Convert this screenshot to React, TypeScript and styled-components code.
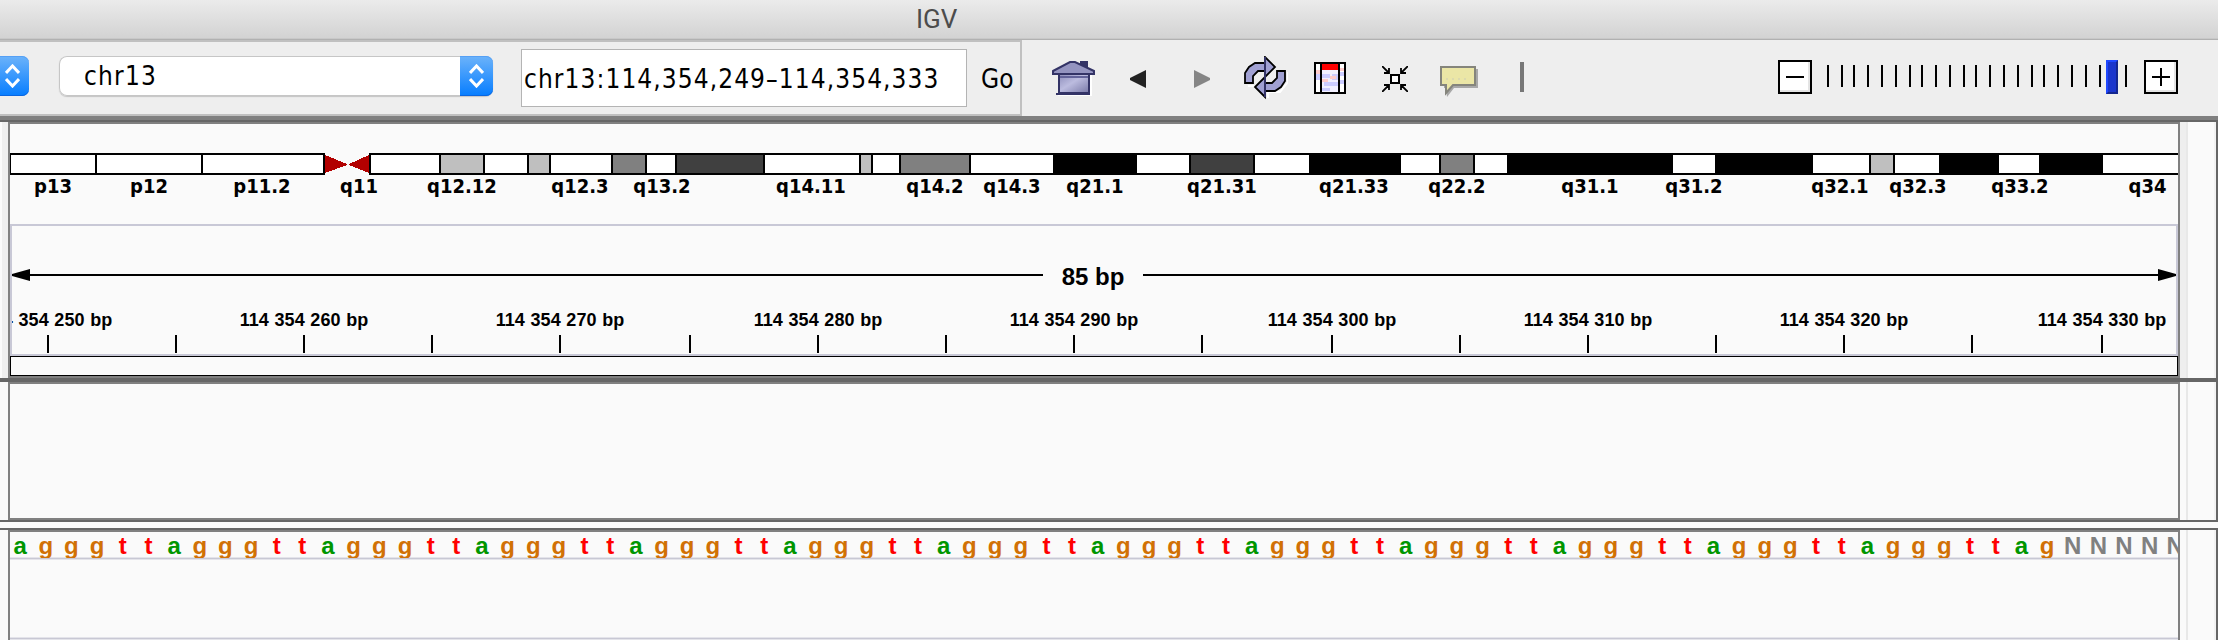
import React from 'react';
import styled, { createGlobalStyle } from 'styled-components';

const Global = createGlobalStyle`
  *, *::before, *::after { box-sizing: border-box; }
  body { margin: 0; background: #fafafa; }
`;

const ui = `'DejaVu Sans Condensed', 'DejaVu Sans', sans-serif`;
const data = `'Liberation Sans', Arial, sans-serif`;

const Window = styled.div`
  width: 2218px;
  height: 640px;
  overflow: hidden;
  background: #fafafa;
  display: flex;
  flex-direction: column;
  color: #000;
`;

const TitleBar = styled.header`
  height: 40px;
  flex: none;
  background: linear-gradient(#ebebeb, #d2d2d2);
  border-bottom: 1px solid #b1b1b1;
  box-shadow: inset 0 -1px #c8c8c8;
  font: 26px/39px Roboto, sans-serif;
  color: #4c4c4c;
  padding-left: 916px;
`;

const Toolbar = styled.div`
  height: 76px;
  flex: none;
  background: #eee;
  display: flex;
`;

const Navigation = styled.div`
  width: 1022px;
  border: 2px solid #c0c0c0;
  border-left: 0;
  display: flex;
  align-items: flex-start;
  font: 26px/30px ${ui};
  font-stretch: condensed;
`;

const Stepper = styled.span<{ $w: number }>`
  width: ${(p) => p.$w}px;
  height: 40px;
  flex: none;
  border-radius: 0 7px 7px 0;
  background: linear-gradient(#6cb3fa, #067dff);
  box-shadow: inset 0 1px #55a0f5, inset 0 -1px #0a66e0;
  display: flex;
  justify-content: flex-end;
  padding: 8px 9px 0 0;
`;

const GenomeEnd = styled.div`
  margin: 14px 30px 0 0;
`;

const ChromosomeSelect = styled.div`
  width: 434px;
  height: 40px;
  margin: 14px 28px 0 0;
  flex: none;
  border-radius: 8px;
  background: #fff;
  box-shadow: inset 0 0 0 1px #c6c6c6, 0 1px 1px #c4c4c4;
  display: flex;
  justify-content: space-between;
`;

const SelectValue = styled.span`
  padding: 5px 0 0 25px;
  letter-spacing: 1.2px;
`;

const LocusField = styled.div`
  width: 446px;
  height: 58px;
  margin: 7px 14px 0 0;
  flex: none;
  background: #fff;
  border: 1px solid #b4b4b4;
  padding: 14px 0 0 2px;
  letter-spacing: 1.08px;
  white-space: nowrap;
`;

const GoButton = styled.span`
  padding-top: 22px;
`;

const Tools = styled.div`
  padding-top: 14px;
  width: 540px;
  display: flex;
  align-items: flex-start;
`;

const Tool = styled.span<{ $gap: number; $top?: number }>`
  margin: ${(p) => p.$top ?? 0}px 0 0 ${(p) => p.$gap}px;
  display: block;
  flex: none;
  line-height: 0;
`;

const Separator = styled.span`
  width: 4px;
  height: 30px;
  margin: 8px 0 0 42px;
  background: #777;
`;

const Zoom = styled.div`
  padding: 20px 0 0 216px;
  display: flex;
`;

const ZoomButton = styled.span`
  width: 34px;
  height: 34px;
  border: 2px solid #000;
  background: #fff;
  box-shadow: inset -2px -2px #e4e4e4;
  display: block;
  line-height: 0;
`;

const Scale = styled.div`
  width: 332px;
  padding-left: 15px;
  display: flex;
`;

const ScaleCell = styled.span<{ $w: number }>`
  width: ${(p) => p.$w}px;
  flex: none;
`;

const ScaleTick = styled.span`
  display: block;
  width: 2px;
  height: 22px;
  margin-top: 5px;
  background: #000;
`;

const Thumb = styled.span`
  display: block;
  width: 12px;
  height: 34px;
  background: #1a35cc;
  border: 2px solid #1f48ff;
  border-right-color: #13268f;
  border-bottom-color: #13268f;
`;

const TopDivider = styled.div`
  height: 6px;
  flex: none;
  border-top: 4px solid #808080;
  border-bottom: 2px solid #666;
`;

const Divider = styled.div<{ $h: number }>`
  height: ${(p) => p.$h}px;
  flex: none;
  background: #666;
`;

const Gap = styled.div`
  height: 10px;
  flex: none;
  border: solid #666;
  border-width: 2px 0;
`;

const Row = styled.div<{ $h: number }>`
  height: ${(p) => p.$h}px;
  flex: none;
  display: flex;
`;

const LeftEdge = styled.div<{ $bg: string }>`
  width: 8px;
  flex: none;
  border-right: 6px solid ${(p) => p.$bg};
`;

const Panel = styled.div<{ $open?: boolean }>`
  width: 2172px;
  flex: none;
  border: 2px solid #808080;
  border-bottom-width: ${(p) => (p.$open ? 0 : 2)}px;
  display: flex;
  flex-direction: column;
  overflow: hidden;
`;

const RightEdge = styled.div<{ $bg: string }>`
  width: 38px;
  flex: none;
  display: flex;
  justify-content: space-between;
  &::before {
    content: '';
    width: 8px;
    background: ${(p) => p.$bg};
    border-right: 2px solid #e8e8e8;
  }
  &::after {
    content: '';
    width: 4px;
    background: #666;
    border-left: 2px solid #f2f2f2;
  }
`;

const Ideogram = styled.div`
  height: 100px;
  padding-top: 29px;
  flex: none;
  display: flex;
`;

const Band = styled.div<{ $w: number; $fill: string; $edge?: number }>`
  width: ${(p) => p.$w}px;
  height: 22px;
  flex: none;
  background: ${(p) => p.$fill};
  border: solid #000;
  border-width: 2px 0 2px ${(p) => p.$edge ?? 2}px;
  display: flex;
  justify-content: center;
`;

const Centromere = styled.div`
  width: 46px;
  flex: none;
  display: flex;
  flex-direction: column;
  align-items: center;
  line-height: 0;
  svg { flex: none; }
`;

const BandLabel = styled.span<{ $shift?: number; $top?: number }>`
  flex: none;
  white-space: nowrap;
  font: bold 20px/24px ${ui};
  font-stretch: condensed;
  margin: ${(p) => p.$top ?? 19}px ${(p) => -60 - (p.$shift ?? 0)}px 0 ${(p) => -60 + (p.$shift ?? 0)}px;
`;

const Ruler = styled.div`
  height: 132px;
  flex: none;
  border: 2px solid #c8c8d6;
  overflow: hidden;
  font-family: ${data};
  font-weight: bold;
`;

const Span = styled.div`
  height: 44px;
  margin-top: 27px;
  display: flex;
  align-items: center;
`;

const SpanLine = styled.span<{ $w: number }>`
  width: ${(p) => p.$w}px;
  height: 2px;
  background: #000;
`;

const SpanLabel = styled.span`
  width: 100px;
  text-align: center;
  font-size: 24px;
  line-height: 28px;
  padding-top: 3px;
`;

const RulerTicks = styled.div`
  display: flex;
  margin-top: 11px;
  padding-left: 35px;
`;

const RulerCell = styled.div<{ $w: number }>`
  width: ${(p) => p.$w}px;
  flex: none;
`;

const RulerLabel = styled.div`
  width: 160px;
  height: 24px;
  margin: 0 0 3px -79px;
  text-align: center;
  font-size: 18px;
  line-height: 24px;
  letter-spacing: 0.05px;
  word-spacing: 0.6px;
  white-space: pre;
`;

const RulerTick = styled.div`
  width: 2px;
  height: 18px;
  background: #000;
`;

const RegionStrip = styled.div`
  height: 20px;
  flex: none;
  border: 1px solid #000;
`;

const Sequence = styled.div`
  height: 27px;
  flex: none;
  overflow: hidden;
  display: flex;
  font: bold 24px/28px ${data};
  border-bottom: 1px solid #c8c8d4;
  box-shadow: 0 1px #e4e4ea, inset 0 -1px #e4e4ea;
`;

const Track = styled.div`
  height: 80px;
  flex: none;
  border-bottom: 1px solid #c8c8d4;
  box-shadow: 0 1px #e4e4ea, inset 0 -1px #e4e4ea;
`;

const Base = styled.span<{ $color: string }>`
  width: 25.67px;
  flex: none;
  color: ${(p) => p.$color};
  text-align: center;
  margin-left: -2.7px;
  margin-right: 2.7px;
`;

const Chevrons = () => (
  <svg width="15" height="24" viewBox="0 0 15 24" fill="none" stroke="#fff" strokeWidth="3">
    <path d="M1 9 7.5 2 14 9M1 15l6.5 7L14 15" />
  </svg>
);

const HomeIcon = () => (
  <svg width="44" height="38" viewBox="0 0 44 38">
    <defs>
      <linearGradient id="wall" x1="0" y1="0" x2="1" y2="1">
        <stop offset="0" stopColor="#8c8cba" />
        <stop offset=".45" stopColor="#bcbcdf" />
        <stop offset="1" stopColor="#7777a6" />
      </linearGradient>
    </defs>
    <path d="M8 15h32v21H6v-2h32z" fill="#fff" />
    <path d="M28 1h8v9h-8z" fill="#333366" />
    <path d="M7 14h30v19H7z" fill="url(#wall)" stroke="#333366" strokeWidth="2" />
    <path d="M4 34h34" stroke="#333366" strokeWidth="2" />
    <path d="M1 11 18 2h5l19 9v3H1z" fill="#9494c0" stroke="#333366" strokeWidth="2" />
    <path d="M8 17h28" stroke="#63639a" strokeWidth="2" />
  </svg>
);

const ArrowIcon = ({ flip }: { flip?: boolean }) => (
  <svg width="16" height="18" viewBox="0 0 16 18">
    <path d={flip ? 'M0 0 16 8v2L0 18z' : 'M16 0 0 8v2l16 8z'} fill={flip ? '#858585' : '#222'} />
  </svg>
);

const RefreshIcon = () => (
  <svg width="44" height="44" viewBox="0 0 44 44">
    <g fill="none" stroke="#fff" strokeWidth="2">
      <path d="M10 30H4M44 16v10l-8 10H24v6" />
    </g>
    <g fill="#a0a0d2" stroke="#000" strokeWidth="1.8">
      <path d="M1 27V17L5 11 11 7H21V1L31 11 21 21V15H14L9 20V27Z" />
      <path d="M41 15V25L37 31 31 35H21V41L11 31 21 21V27H28L33 22V15Z" />
    </g>
    <path d="M21 1v20M21 21v20" stroke="#333366" strokeWidth="2" />
  </svg>
);

const RegionIcon = () => (
  <svg width="32" height="32" viewBox="0 0 32 32" shapeRendering="crispEdges">
    <path d="M0 0h32v32H0z" fill="#fff" />
    <path d="M8 8h16v22H8z" fill="#f2f0ff" />
    <path d="M2 12h4v6H2zM8 12h8v4H8zM10 20h14v4H10zM18 12h6v6h-6zM8 26h8v3H8zM26 10h4v4h-4zM26 18h4v4h-4z" fill="#ccccff" />
    <path d="M8 17h6v3H8zM16 14h6v3h-6zM2 8h4v4H2zM26 6h4v3h-4z" fill="#ffcccc" />
    <path d="M8 2h16v6H8z" fill="#f00" />
    <path d="M1 1h30v30H1zM7 1v30M25 1v30" fill="none" stroke="#000" strokeWidth="2" />
  </svg>
);

const ShrinkIcon = () => (
  <svg width="26" height="26" viewBox="0 0 26 26" fill="none" stroke="#000" strokeWidth="2">
    <path d="M9 9h8v8H9z" fill="#fff" />
    <path d="M0 0 7 7M26 0 19 7M0 26 7 19M26 26 19 19M2 7h5V2M24 7h-5V2M2 19h5v5M24 19h-5v5" strokeWidth="1.8" />
  </svg>
);

const BubbleIcon = () => (
  <svg width="38" height="32" viewBox="0 0 38 32">
    <path d="M4 3h34v19H14L7 31 6 22H4z" fill="#a8a8a8" />
    <path d="M1 1h34v18H13l-7 8v-8H1z" fill="#ebe6a6" stroke="#85857c" strokeWidth="2" />
    <path d="M6 13h22" stroke="#d8d6b0" strokeWidth="1.5" strokeDasharray="2 4" />
  </svg>
);

const scaleTicks = [1827, 1841, 1853, 1867, 1881, 1895, 1909, 1921, 1935, 1949, 1963, 1975, 1989, 2003, 2017, 2031, 2043, 2057, 2071, 2085, 2099, 2106, 2125];
const thumbAt = 2106;

type BandSpec = [start: number, fill: string, name?: string, shift?: number];

const W = '#fff', L = '#bfbfbf', M = '#808080', D = '#404040', K = '#000';
const pArm: BandSpec[] = [[10, W, 'p13'], [95, W, 'p12'], [201, W, 'p11.2', -1]];
const qArm: BandSpec[] = [
  [369, W], [439, L, 'q12.12'], [483, W], [527, L], [549, W, 'q12.3', -1], [611, M], [645, W, 'q13.2', 1], [675, D],
  [763, W, 'q14.11', -1], [859, L], [871, W], [899, M, 'q14.2'], [969, W, 'q14.3'], [1053, K, 'q21.1'], [1135, W],
  [1189, D, 'q21.31'], [1253, W], [1309, K, 'q21.33', -1], [1399, W], [1439, M, 'q22.2'], [1473, W],
  [1507, K, 'q31.1'], [1671, W, 'q31.2'], [1715, K], [1811, W, 'q32.1', -1], [1869, L], [1893, W, 'q32.3', 1],
  [1939, K], [1997, W, 'q33.2', 1], [2039, K], [2101, W, 'q34', 7],
];

const rulerTicks = [47, 175, 303, 431, 559, 689, 817, 945, 1073, 1201, 1331, 1459, 1587, 1715, 1843, 1971, 2101];

const sequence = 'agggtt'.repeat(13) + 'agNNNNN';
const baseColors: Record<string, string> = { a: '#009600', g: '#d17105', t: '#f00', N: '#808080' };

const Bands = ({ arm, end }: { arm: BandSpec[]; end: number }) => (
  <>
    {arm.map(([x, fill, name, shift], i) => (
      <Band key={x} $w={(arm[i + 1]?.[0] ?? end) - x} $fill={fill} $edge={x === 10 ? 1 : 2}>
        {name && <BandLabel $shift={shift}>{name}</BandLabel>}
      </Band>
    ))}
  </>
);

export default function App() {
  return (
    <Window>
      <Global />
      <TitleBar>IGV</TitleBar>
      <Toolbar>
        <Navigation>
          <GenomeEnd><Stepper $w={29}><Chevrons /></Stepper></GenomeEnd>
          <ChromosomeSelect>
            <SelectValue>chr13</SelectValue>
            <Stepper $w={33}><Chevrons /></Stepper>
          </ChromosomeSelect>
          <LocusField>chr13:114,354,249–114,354,333</LocusField>
          <GoButton>Go</GoButton>
        </Navigation>
        <Tools>
          <Tool $gap={30} $top={6}><HomeIcon /></Tool>
          <Tool $gap={34} $top={16}><ArrowIcon /></Tool>
          <Tool $gap={48} $top={16}><ArrowIcon flip /></Tool>
          <Tool $gap={34} $top={2}><RefreshIcon /></Tool>
          <Tool $gap={26} $top={8}><RegionIcon /></Tool>
          <Tool $gap={36} $top={12}><ShrinkIcon /></Tool>
          <Tool $gap={32} $top={12}><BubbleIcon /></Tool>
          <Separator />
        </Tools>
        <Zoom>
          <ZoomButton>
            <svg width="30" height="30"><path d="M6 15h18" stroke="#000" strokeWidth="2" /></svg>
          </ZoomButton>
          <Scale>
            {scaleTicks.map((x, i) => (
              <ScaleCell key={x} $w={(scaleTicks[i + 1] ?? x + 2) - x}>
                {x === thumbAt ? <Thumb /> : <ScaleTick />}
              </ScaleCell>
            ))}
          </Scale>
          <ZoomButton>
            <svg width="30" height="30"><path d="M6 15h18M15 6v18" stroke="#000" strokeWidth="2" /></svg>
          </ZoomButton>
        </Zoom>
      </Toolbar>
      <TopDivider />
      <Row $h={256}>
        <LeftEdge $bg="#eee" />
        <Panel>
          <Ideogram>
            <Bands arm={pArm} end={323} />
            <Centromere>
              <svg width="46" height="22" shapeRendering="crispEdges">
                <path d="M0 0h2v22H0z" />
                <path d="M2 2 24 11v1L2 20zM46 2 26 11v1l20 8z" fill="#b20000" />
              </svg>
              <BandLabel $shift={13} $top={-1}>q11</BandLabel>
            </Centromere>
            <Bands arm={qArm} end={2178} />
          </Ideogram>
          <Ruler>
            <Span>
              <svg width="18" height="12"><path d="M18 0v12L0 7V5z" /></svg>
              <SpanLine $w={1013} />
              <SpanLabel>85 bp</SpanLabel>
              <SpanLine $w={1015} />
              <svg width="18" height="12"><path d="M0 0v12l18-5V5z" /></svg>
            </Span>
            <RulerTicks>
              {rulerTicks.map((x, i) => (
                <RulerCell key={x} $w={(rulerTicks[i + 1] ?? x + 2) - x}>
                  <RulerLabel>{i % 2 === 0 ? `114 354 ${250 + i * 5} bp` : ''}</RulerLabel>
                  <RulerTick />
                </RulerCell>
              ))}
            </RulerTicks>
          </Ruler>
          <RegionStrip />
        </Panel>
        <RightEdge $bg="#eee" />
      </Row>
      <Divider $h={4} />
      <Row $h={138}>
        <LeftEdge $bg="#fafafa" />
        <Panel />
        <RightEdge $bg="#fafafa" />
      </Row>
      <Gap />
      <Row $h={110}>
        <LeftEdge $bg="#fafafa" />
        <Panel $open>
          <Sequence>
            {sequence.split('').map((b, i) => (
              <Base key={i} $color={baseColors[b]}>{b}</Base>
            ))}
          </Sequence>
          <Track />
        </Panel>
        <RightEdge $bg="#fafafa" />
      </Row>
    </Window>
  );
}
